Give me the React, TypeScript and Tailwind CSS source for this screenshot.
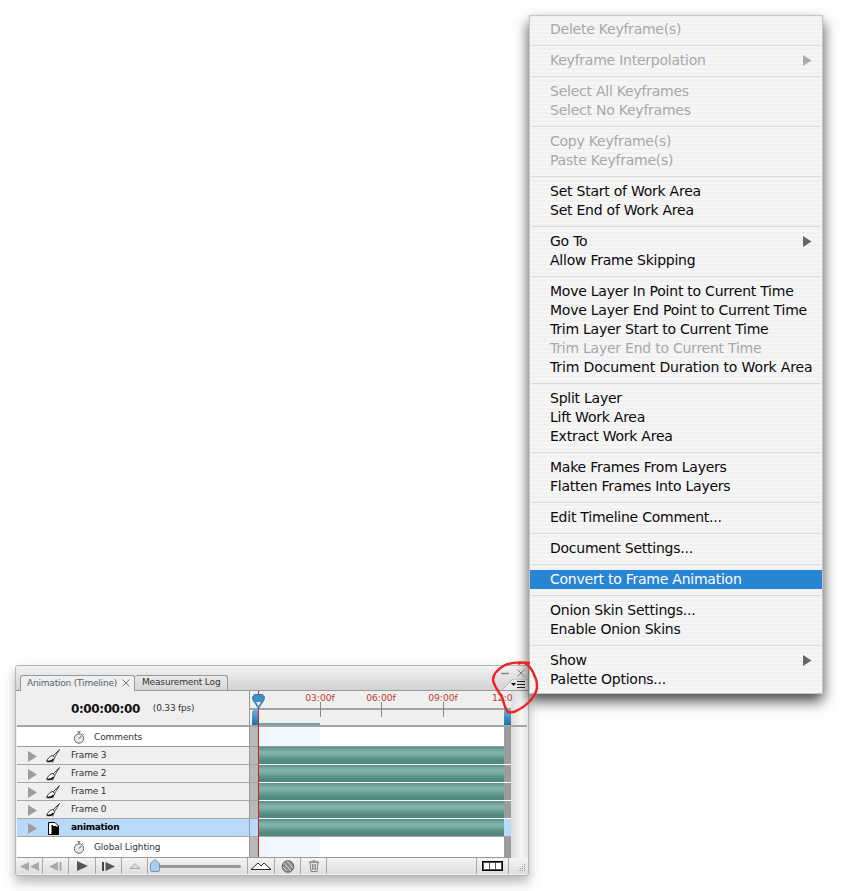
import React from "react";

const FONT = "font-['DejaVu_Sans',sans-serif]";

type Item = { t: string; off?: boolean; arrow?: boolean; hi?: boolean; wide?: boolean };
const groups: Item[][] = [
  [{ t: "Delete Keyframe(s)", off: true }],
  [{ t: "Keyframe Interpolation", off: true, arrow: true }],
  [{ t: "Select All Keyframes", off: true }, { t: "Select No Keyframes", off: true }],
  [{ t: "Copy Keyframe(s)", off: true }, { t: "Paste Keyframe(s)", off: true }],
  [{ t: "Set Start of Work Area" }, { t: "Set End of Work Area" }],
  [{ t: "Go To", arrow: true }, { t: "Allow Frame Skipping" }],
  [
    { t: "Move Layer In Point to Current Time" },
    { t: "Move Layer End Point to Current Time" },
    { t: "Trim Layer Start to Current Time" },
    { t: "Trim Layer End to Current Time", off: true },
    { t: "Trim Document Duration to Work Area", wide: true },
  ],
  [{ t: "Split Layer" }, { t: "Lift Work Area" }, { t: "Extract Work Area" }],
  [{ t: "Make Frames From Layers" }, { t: "Flatten Frames Into Layers" }],
  [{ t: "Edit Timeline Comment..." }],
  [{ t: "Document Settings..." }],
  [{ t: "Convert to Frame Animation", hi: true }],
  [{ t: "Onion Skin Settings..." }, { t: "Enable Onion Skins" }],
  [{ t: "Show", arrow: true }, { t: "Palette Options..." }],
];

function Menu() {
  return (
    <div className="absolute left-[529px] top-[15px] w-[294px] border border-[#c6c6c6] py-[4px] bg-[repeating-linear-gradient(180deg,#f1f1f1_0px,#f1f1f1_2px,#f6f6f6_2px,#f6f6f6_4px)] shadow-[0_7px_13px_rgba(0,0,0,0.72)]">
      {groups.map((g, i) => (
        <div key={i}>
          {i > 0 && (
            <div className="h-[12px] flex items-center px-[1px]">
              <div className="h-px w-full bg-[#d9d9d9]" />
            </div>
          )}
          {g.map((it) => (
            <div
              key={it.t}
              className={`h-[19px] pl-[20px] pr-[10px] flex items-center justify-between text-[14px] leading-[19px] whitespace-nowrap ${
                it.wide ? "tracking-[-0.13px]" : "tracking-[-0.24px]"
              } ${
                it.hi
                  ? "bg-[#2884d4] text-[#ffffff] font-medium"
                  : it.off
                    ? "text-[#a8a8a8]"
                    : "text-[#0a0a0a]"
              }`}
            >
              <span>{it.t}</span>
              {it.arrow && (
                <svg width="9" height="11" viewBox="0 0 9 11">
                  <path d="M0 0 L8.5 5.5 L0 11 Z" fill={it.off ? "#aaaaaa" : "#666666"} />
                </svg>
              )}
            </div>
          ))}
        </div>
      ))}
    </div>
  );
}

function Stopwatch() {
  return (
    <svg width="12" height="13" viewBox="0 0 12 13">
      <path d="M4.5 0.8h3M6 1v1.5M9.5 2.5l1 1" stroke="#555" strokeWidth="1" fill="none" />
      <circle cx="6" cy="7.5" r="4.7" fill="#e8e8e8" stroke="#666" strokeWidth="1" />
      <path d="M6 7.5 L8.3 5.2" stroke="#444" strokeWidth="1" />
    </svg>
  );
}

function Brush() {
  return (
    <svg width="14" height="14" viewBox="0 0 14 14">
      <path d="M13.5 0.5 L7 7 L8.5 8.5 Z" fill="#fff" stroke="#333" strokeWidth="0.9" />
      <path d="M8.5 8 L6.5 13.5" stroke="#555" strokeWidth="1.1" />
      <path d="M7 6.5 C4 6.5 2.5 9 0.5 12 C3 13 7.5 12 8.8 8.8 Z" fill="#f4f4f4" stroke="#333" strokeWidth="0.9" />
      <path d="M1 12.3 C3 12.8 6 12 7.5 10" stroke="#111" strokeWidth="1.4" fill="none" />
    </svg>
  );
}

function DocIcon() {
  return (
    <svg width="11" height="13" viewBox="0 0 11 13">
      <path d="M0.5 0.5 H7 L10.5 4 V12.5 H0.5 Z" fill="#fff" stroke="#000" strokeWidth="1" />
      <path d="M3.5 3 H6.5 L8 4.5 H10.5 V12.5 H3.5 Z" fill="#000" />
      <path d="M5 1.5 H7 V4 H5 Z" fill="#fff" />
    </svg>
  );
}

function Expand() {
  return (
    <svg width="9" height="11" viewBox="0 0 9 11" className="shrink-0">
      <path d="M0 0 L9 5.5 L0 11 Z" fill="#9c9c9c" />
    </svg>
  );
}

const BAR =
  "bg-[linear-gradient(180deg,#5b918a_0%,#6a9f97_12%,#83b4ab_30%,#78aca2_48%,#64998f_62%,#528a82_82%,#4f8880_100%)]";

function LayerRow({ label, active, doc }: { label: string; active?: boolean; doc?: boolean }) {
  return (
    <div className="flex h-[18px]">
      <div
        className={`w-[233px] flex items-center pl-[11px] pt-[1px] text-[9px] text-[#333] border-r border-r-[#999] border-b border-b-[#a6a6a6] ${
          active ? "bg-[#b9d9f9]" : "bg-[#efefef]"
        }`}
      >
        <Expand />
        <div className="w-[32px] flex justify-center">{doc ? <DocIcon /> : <Brush />}</div>
        <span className={active ? "font-bold text-black pl-[2px] tracking-[-0.3px]" : "pl-[2px] tracking-[-0.2px]"}>
          {label}
        </span>
      </div>
      <div className={`w-[9px] border-b border-[#a6a6a6] ${active ? "bg-[#b9d9f9]" : "bg-[#b8b8b8]"}`} />
      <div className={`flex-1 border-b ${active ? "border-[#a6a6a6]" : "border-white"}`}>
        <div className={`h-full ${BAR}`} />
      </div>
      <div className={`w-[7px] border-b ${active ? "bg-[#b9d9f9] border-[#a6a6a6]" : "bg-[#9c9c9c] border-white"}`} />
    </div>
  );
}

function SoloRow({ label, h, top }: { label: string; h: string; top: string }) {
  return (
    <div className={`flex ${h} border-b border-[#999]`}>
      <div className={`w-[233px] bg-white flex items-center pl-[56px] ${top} text-[9px] text-[#333] border-r border-[#999]`}>
        <Stopwatch />
        <span className="pl-[9px] tracking-[-0.1px]">{label}</span>
      </div>
      <div className="w-[9px] bg-[#b8b8b8]" />
      <div className="flex-1 bg-white flex">
        <div className="w-[61px] bg-[#eff6fe]" />
      </div>
      <div className="w-[7px] bg-[#9c9c9c]" />
    </div>
  );
}

function Tick({ label, left }: { label: string; left: string }) {
  return (
    <div className={`absolute top-0 ${left} w-0`}>
      <span className="absolute top-[1px] -left-[15px] w-[30px] text-center text-[9.2px] leading-[12px] text-[#c0392b] whitespace-nowrap">
        {label}
      </span>
      <div className="absolute top-[11px] left-0 w-px h-[15px] bg-[#8a8a8a]" />
    </div>
  );
}

function Btn({ w, children }: { w: string; children?: React.ReactNode }) {
  return <div className={`${w} h-full flex items-center justify-center border-r border-[#a8a8a8]`}>{children}</div>;
}

function Palette() {
  return (
    <div className="relative ml-[15px] w-[514px] h-[211px] border border-[#b5b5b5] rounded-[3px] bg-[#efefef] shadow-[0_6px_12px_rgba(0,0,0,0.3)] overflow-hidden">
      {/* tab bar */}
      <div className="relative h-[25px] flex items-end pl-[4px] justify-between bg-[linear-gradient(180deg,#f3f3f3_0%,#d2d2d2_100%)] border-b border-[#999]">
        <div className="flex items-end text-[9px] leading-[14px]">
          <div className="h-[16px] w-[115px] -mb-px flex items-center pl-[6px] pb-[2px] gap-[5px] bg-[#efefef] border border-b-0 border-[#999] rounded-t-[3px] text-[#55606a] z-10 tracking-[-0.2px]">
            <span className="whitespace-nowrap">Animation (Timeline)</span>
            <svg width="8" height="8" viewBox="0 0 8 8">
              <path d="M0.5 0.5 L7.5 7.5 M7.5 0.5 L0.5 7.5" stroke="#777" strokeWidth="1" />
            </svg>
          </div>
          <div className="h-[15px] w-[93px] flex items-center pl-[7px] pb-[2px] bg-[linear-gradient(180deg,#e9e9e9,#d6d6d6)] border border-b-0 border-l-0 border-[#999] rounded-t-[3px] text-[#333] tracking-[-0.15px]">
            <span className="whitespace-nowrap">Measurement Log</span>
          </div>
        </div>
        <svg className="absolute left-[486px] top-[13px]" width="26" height="11" viewBox="0 0 26 11">
          <path d="M0 11 L11 0 H26 V11 Z" fill="#ececec" />
          <path d="M0 11 L11 0 H26" fill="none" stroke="#b8b8b8" strokeWidth="1" />
        </svg>
        <div className="relative w-[24px] h-[24px] flex flex-col mr-[2px]">
          <div className="h-[13px] flex items-center justify-between pt-[1px]">
            <svg width="8" height="8" viewBox="0 0 8 8" className="-ml-[1px]">
              <path d="M0 4.5 H8" stroke="#888" strokeWidth="1.4" />
            </svg>
            <svg width="8" height="8" viewBox="0 0 8 8" className="mr-[1px]">
              <path d="M0.5 0.5 L7.5 7.5 M7.5 0.5 L0.5 7.5" stroke="#888" strokeWidth="1" />
            </svg>
          </div>
          <div className="flex-1 flex items-center justify-end gap-[1px] pr-[1px]">
            <svg width="5" height="3" viewBox="0 0 5 3">
              <path d="M0 0 H5 L2.5 3 Z" fill="#000" />
            </svg>
            <svg width="8" height="7" viewBox="0 0 8 7">
              <path d="M0 0.5 H8 M0 3.5 H8 M0 6.5 H8" stroke="#222" strokeWidth="1" />
            </svg>
          </div>
        </div>
      </div>

      {/* timeline body */}
      <div className="flex">
        <div className="w-[494px] ml-[1px] relative">
          {/* header */}
          <div className="flex h-[36px] border-b-2 border-[#a3a3a3]">
            <div className="w-[233px] flex items-center pl-[54px] pt-[1px] border-r border-[#999]">
              <span className="text-[12px] font-bold text-[#111] leading-none tracking-[-0.4px] whitespace-nowrap">0:00:00:00</span>
              <span className="text-[9px] text-[#333] pl-[13px] tracking-[-0.2px] whitespace-nowrap">(0.33 fps)</span>
            </div>
            <div className="flex-1 relative">
              <div className="h-[19px] border-b-2 border-[#a3a3a3]" />
              <Tick label="03:00f" left="left-[70px]" />
              <Tick label="06:00f" left="left-[131px]" />
              <Tick label="09:00f" left="left-[193px]" />
              <span className="absolute top-[1px] left-[242px] text-[9.2px] leading-[12px] text-[#c0392b] whitespace-nowrap">
                12:0
              </span>
              <div className="absolute left-[2px] top-[18px] w-[6px] h-[16px] rounded-tl-[4px] bg-[linear-gradient(180deg,#6fb2de,#1f6ea8)]" />
              <div className="absolute right-0 top-[18px] w-[7px] h-[16px] bg-[linear-gradient(180deg,#6fb2de,#1f6ea8)]" />
              <div className="absolute left-[9px] top-[32px] w-[61px] h-[2px] bg-[#6fa59c]" />
            </div>
          </div>
          <SoloRow label="Comments" h="h-[20px]" top="pt-[2px]" />
          <LayerRow label="Frame 3" />
          <LayerRow label="Frame 2" />
          <LayerRow label="Frame 1" />
          <LayerRow label="Frame 0" />
          <LayerRow label="animation" active doc />
          <SoloRow label="Global Lighting" h="h-[21px]" top="pt-[1px]" />
          {/* playhead */}
          <div className="absolute left-[241px] top-0 w-px h-[166px] bg-[#d62020]" />
          <svg className="absolute left-[235px] top-[3px]" width="13" height="15" viewBox="0 0 13 15">
            <path d="M2.5 0.5 H10.5 L12.5 3 L12 6 L6.5 14.5 L1 6 L0.5 3 Z" fill="#3f8fc4" stroke="#2a6f9e" strokeWidth="0.8" />
            <path d="M4 8 L9 8 L6.5 12 Z" fill="#e9e9e9" />
          </svg>
        </div>
        <div className="flex-1 bg-[linear-gradient(90deg,#dcdcdc,#f6f6f6_60%,#e4e4e4)]">
          <div className="h-[36px] border-b-2 border-[#a3a3a3] mr-[1px]" />
        </div>
      </div>

      {/* bottom bar */}
      <div className="h-[16px] flex pl-[1px] bg-[linear-gradient(180deg,#f4f4f4,#dedede)]">
        <Btn w="w-[26px]">
          <svg width="19" height="9" viewBox="0 0 19 9">
            <path d="M9 0 V9 L0 4.5 Z M19 0 V9 L10 4.5 Z" fill="#a9a9a9" />
          </svg>
        </Btn>
        <Btn w="w-[26px]">
          <svg width="13" height="9" viewBox="0 0 13 9">
            <path d="M9 0 V9 L0 4.5 Z" fill="#a9a9a9" />
            <rect x="10.5" y="0" width="2" height="9" fill="#a9a9a9" />
          </svg>
        </Btn>
        <Btn w="w-[27px]">
          <svg width="11" height="10" viewBox="0 0 11 10">
            <path d="M0 0 V10 L11 5 Z" fill="#555" />
          </svg>
        </Btn>
        <Btn w="w-[26px]">
          <svg width="13" height="9" viewBox="0 0 13 9">
            <rect x="0" y="0" width="2" height="9" fill="#444" />
            <path d="M3.5 0 V9 L13 4.5 Z" fill="#555" />
          </svg>
        </Btn>
        <Btn w="w-[26px]">
          <svg width="10" height="6" viewBox="0 0 10 6">
            <path d="M0 5.5 L5 0.5 L10 5.5 Z" fill="#ddd" stroke="#999" strokeWidth="0.8" />
          </svg>
        </Btn>
        <div className="w-[100px] h-full flex items-center relative border-r border-[#a8a8a8]">
          <div className="ml-[3px] w-[90px] h-[3px] rounded-full bg-[#9a9a9a]" />
          <svg className="absolute left-[2px] top-[1px]" width="10" height="13" viewBox="0 0 10 13">
            <path d="M5 0.5 L9.5 4.5 V11 Q9.5 12.5 8 12.5 H2 Q0.5 12.5 0.5 11 V4.5 Z" fill="#a9cfee" stroke="#5d88a8" strokeWidth="0.8" />
          </svg>
        </div>
        <Btn w="w-[27px]">
          <svg width="20" height="8" viewBox="0 0 20 8">
            <path d="M0 7.5 H20 L13 1 L10 4 L7 1 Z" fill="#fff" stroke="#111" strokeWidth="0.9" />
          </svg>
        </Btn>
        <Btn w="w-[26px]">
          <svg width="14" height="13" viewBox="0 0 14 13">
            <circle cx="7" cy="6.5" r="5.8" fill="#8d8d8d" stroke="#444" strokeWidth="0.8" />
            <path d="M3 3 L10 11 M6 1 L12 8 M2 7 L6 11" stroke="#ddd" strokeWidth="1" />
          </svg>
        </Btn>
        <Btn w="w-[26px]">
          <svg width="10" height="12" viewBox="0 0 10 12">
            <path d="M1 2 H9 L8 11.5 H2 Z" fill="#e6e6e6" stroke="#777" strokeWidth="0.9" />
            <path d="M0 2 H10 M3.5 0.8 H6.5 M3.5 4 V10 M5 4 V10 M6.5 4 V10" stroke="#777" strokeWidth="0.8" />
          </svg>
        </Btn>
        <div className="flex-1" />
        <div className="w-[33px] h-full flex items-center justify-center border-l border-r border-[#a8a8a8]">
          <div className="w-[21px] h-[10px] border border-black flex gap-px p-px bg-[#555]">
            <div className="flex-1 bg-white" />
            <div className="flex-1 bg-white" />
            <div className="flex-1 bg-white" />
          </div>
        </div>
        <div className="w-[19px] h-full flex items-end justify-end pb-[2px] pr-[2px]">
          <svg width="9" height="9" viewBox="0 0 9 9">
            <path d="M7 1h1v1H7zM5 3h1v1H5zM7 3h1v1H7zM3 5h1v1H3zM5 5h1v1H5zM7 5h1v1H7zM1 7h1v1H1zM3 7h1v1H3zM5 7h1v1H5zM7 7h1v1H7z" fill="#999" />
          </svg>
        </div>
      </div>
    </div>
  );
}

export default function App() {
  return (
    <div className={`relative w-[849px] h-[891px] bg-white overflow-hidden pt-[665px] ${FONT}`}>
      <Palette />
      <Menu />
      <svg className="absolute left-[488px] top-[658px]" width="56" height="60" viewBox="0 0 56 60">
        <path
          d="M42 5 C34 4 24 4 17 7 C10 11 5 16 5 22 C6 28 10 33 14 39 C16 45 17 51 20 54 C24 55 27 54 30 52 C34 50 37 48 40 45 C44 41 48 36 49 30 C49 25 49 22 47 19 C45 13 42 8 37 5 C34 4 32 5 30 6"
          fill="none"
          stroke="#ee2222"
          strokeWidth="2.4"
        />
      </svg>
    </div>
  );
}
